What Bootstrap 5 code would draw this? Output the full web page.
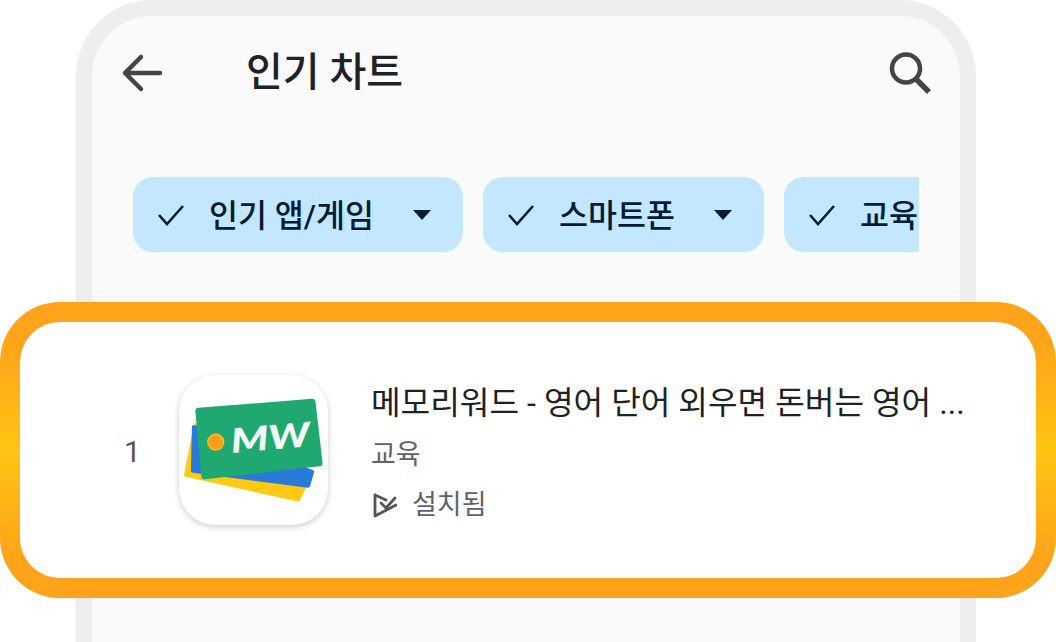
<!DOCTYPE html>
<html lang="ko">
<head>
  <meta charset="UTF-8" />
  <title>인기 차트</title>
  <link href="https://cdn.jsdelivr.net/npm/bootstrap@5.3.0/dist/css/bootstrap.min.css" rel="stylesheet">
  <style>
    html, body { height: 642px; overflow: hidden; background: #fff; }
    body { font-family: Roboto, "Noto Sans CJK KR", sans-serif; }
    .phone-frame { margin-left: 76px; width: 900px; height: 642px; border: 16px solid #eeeeee; border-bottom: 0; border-radius: 76px 76px 0 0; background: #fafafa; }
    .app-bar { height: 114px; padding: 0 28px 0 29px; color: #444; }
    .page-title { font-size: 40px; font-weight: 500; color: #202124; margin: 0 0 0 81px; line-height: 1; }
    .chip-scroller { margin: 47px 41px 0 41px; gap: 20px; overflow: hidden; }
    .filter-chip { height: 75px; border-radius: 20px; background: #c2e7ff; color: #001d35; font-size: 31.5px; font-weight: 500; flex-shrink: 0; padding: 0 32px 0 24px; white-space: nowrap; }
    .chip-label { padding-top: 4px; }
    .chip-check { margin-right: 24px; flex-shrink: 0; }
    .chip-caret { width: 0; height: 0; margin-left: 39px; border-left: 9px solid transparent; border-right: 9px solid transparent; border-top: 10px solid #001d35; }
    .highlight-card { margin: 50px 0 0 -92px; width: 1056px; height: 296px; border: 20px solid transparent; border-radius: 60px; background: linear-gradient(#fff, #fff) padding-box, linear-gradient(180deg, #ffa31a 0%, #ffa31a 12%, #ffc414 50%, #ffa31a 88%, #ffa31a 100%) border-box; }
    .rank-num { width: 159px; padding: 4px 0 0 104px; font-size: 30px; color: #555; line-height: 1; }
    .app-icon { width: 149px; height: 150px; border-radius: 36px; background: #fff; box-shadow: 0 2px 6px rgba(0, 0, 0, .2); flex-shrink: 0; }
    .app-info { margin-left: 43px; padding-top: 6px; }
    .app-name { font-size: 32.2px; color: #202124; line-height: 1; white-space: nowrap; }
    .app-sub { font-size: 27px; color: #5f6368; line-height: 1; }
    .app-cat { margin-top: 22px; }
    .app-state { margin-top: 23px; gap: 15px; }
  </style>
</head>
<body>
  <div class="phone-frame">
    <div class="app-bar d-flex align-items-center">
      <svg width="44" height="44" viewBox="0 0 44 44" fill="none" stroke="#444" stroke-width="4.5" stroke-linecap="round" stroke-linejoin="round"><path d="M39 22H5M20 6 4 22l16 16"/></svg>
      <div class="page-title">인기 차트</div>
      <svg class="ms-auto" width="46" height="48" viewBox="0 0 46 48" fill="none" stroke="#444" stroke-width="4.5"><circle cx="20" cy="19.5" r="14"/><path d="M30 30 43 43" stroke-width="5.5"/></svg>
    </div>
    <div class="chip-scroller d-flex">
      <div class="filter-chip d-flex align-items-center">
        <svg class="chip-check" width="28" height="24" viewBox="0 0 28 24" fill="none" stroke="#001d35" stroke-width="2.6"><path d="M2 12l8 9L26 3"/></svg>
        <span class="chip-label">인기 앱/게임</span><span class="chip-caret"></span>
      </div>
      <div class="filter-chip d-flex align-items-center">
        <svg class="chip-check" width="28" height="24" viewBox="0 0 28 24" fill="none" stroke="#001d35" stroke-width="2.6"><path d="M2 12l8 9L26 3"/></svg>
        <span class="chip-label">스마트폰</span><span class="chip-caret"></span>
      </div>
      <div class="filter-chip d-flex align-items-center">
        <svg class="chip-check" width="28" height="24" viewBox="0 0 28 24" fill="none" stroke="#001d35" stroke-width="2.6"><path d="M2 12l8 9L26 3"/></svg>
        <span class="chip-label">교육</span><span class="chip-caret"></span>
      </div>
    </div>
    <div class="highlight-card d-flex align-items-center">
      <div class="rank-num">1</div>
      <div class="app-icon">
        <svg width="149" height="150" viewBox="0 0 150 150" stroke-linejoin="round">
          <polygon points="17,50 7,100 120,125 126,112" fill="#ffc914" stroke="#ffc914" stroke-width="4"/>
          <polygon points="15,52 14,96 130,111 134,97" fill="#2979d9" stroke="#2979d9" stroke-width="4"/>
          <polygon points="20,36 134,27 141,88 26,101" fill="#1fa971" stroke="#1fa971" stroke-width="7"/>
          <circle cx="37" cy="67" r="8" fill="#ff9d1c" stroke="#ffb81c" stroke-width="1.5"/>
          <text x="53" y="78" transform="rotate(-5 53 78)" font-family="Lato, sans-serif" font-weight="900" font-style="italic" font-size="34" fill="#f4f9f6" textLength="80" lengthAdjust="spacingAndGlyphs">MW</text>
        </svg>
      </div>
      <div class="app-info">
        <div class="app-name">메모리워드 - 영어 단어 외우면 돈버는 영어 ...</div>
        <div class="app-sub app-cat">교육</div>
        <div class="app-sub app-state d-flex align-items-center">
          <svg width="26" height="26" viewBox="0 0 26 26" fill="none" stroke="#555" stroke-width="2.8" stroke-linejoin="round" stroke-linecap="round"><path d="M4 3v21L25 13M4 3l11 5"/><path d="M10 11l5 5 9-10"/></svg>
          <span>설치됨</span>
        </div>
      </div>
    </div>
  </div>
  <script src="https://cdn.jsdelivr.net/npm/bootstrap@5.3.0/dist/js/bootstrap.bundle.min.js"></script>
</body>
</html>
